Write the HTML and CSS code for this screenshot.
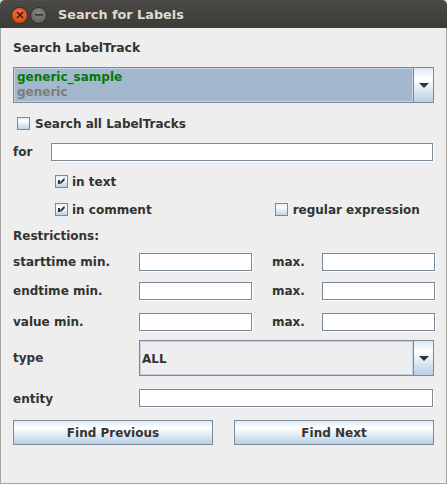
FILE: index.html
```html
<!DOCTYPE html>
<html>
<head>
<meta charset="utf-8">
<link rel="stylesheet" href="styles.css">
</head>
<body>
<div class="window">
  <div class="titlebar">
    <div class="wbtns">
      <span class="wbtn close"><svg width="8" height="8" viewBox="0 0 8 8"><path d="M1 1L7 7M7 1L1 7" stroke="#3a1a10" stroke-width="1.6"/></svg></span>
      <span class="wbtn min"><svg width="8" height="2" viewBox="0 0 8 2"><rect width="8" height="1.6" fill="#2e2d2a"/></svg></span>
    </div>
    <div class="title">Search for Labels</div>
  </div>
  <div class="body">
    <div class="row heading">Search LabelTrack</div>

    <div class="combo big">
      <div class="combo-value list">
        <div class="item-name">generic_sample</div>
        <div class="item-sub">generic</div>
      </div>
      <div class="combo-btn"><svg width="10" height="5" viewBox="0 0 10 5"><polygon points="0,0 10,0 5,5" fill="#333"/></svg></div>
    </div>

    <div class="row chkrow r-all">
      <span class="chk"><svg width="13" height="13" viewBox="0 0 13 13"><defs><linearGradient id="g1" x1="0" y1="0" x2="0" y2="1"><stop offset="0" stop-color="#dde8f3"/><stop offset="0.3" stop-color="#ffffff"/><stop offset="1" stop-color="#b8cfe5"/></linearGradient></defs><rect x="0.5" y="0.5" width="12" height="12" fill="url(#g1)" stroke="#7a8a99"/></svg></span>
      <span class="lbl">Search all LabelTracks</span>
    </div>

    <div class="row r-for">
      <span class="lbl w-for">for</span>
      <span class="field f-for"></span>
    </div>

    <div class="row chkrow r-text">
      <span class="chk"><svg width="13" height="13" viewBox="0 0 13 13"><defs><linearGradient id="g2" x1="0" y1="0" x2="0" y2="1"><stop offset="0" stop-color="#dde8f3"/><stop offset="0.3" stop-color="#ffffff"/><stop offset="1" stop-color="#b8cfe5"/></linearGradient></defs><rect x="0.5" y="0.5" width="12" height="12" fill="url(#g2)" stroke="#7a8a99"/><rect x="3" y="5" width="2" height="4" fill="#333"/><path d="M9.5 3.5L5.5 7.5M9.5 4.5L5.5 8.5" stroke="#333" stroke-width="1.2"/></svg></span>
      <span class="lbl">in text</span>
    </div>

    <div class="row chkrow r-comment">
      <div class="chkgroup">
        <span class="chk"><svg width="13" height="13" viewBox="0 0 13 13"><defs><linearGradient id="g3" x1="0" y1="0" x2="0" y2="1"><stop offset="0" stop-color="#dde8f3"/><stop offset="0.3" stop-color="#ffffff"/><stop offset="1" stop-color="#b8cfe5"/></linearGradient></defs><rect x="0.5" y="0.5" width="12" height="12" fill="url(#g3)" stroke="#7a8a99"/><rect x="3" y="5" width="2" height="4" fill="#333"/><path d="M9.5 3.5L5.5 7.5M9.5 4.5L5.5 8.5" stroke="#333" stroke-width="1.2"/></svg></span>
        <span class="lbl">in comment</span>
      </div>
      <div class="chkgroup regex">
        <span class="chk"><svg width="13" height="13" viewBox="0 0 13 13"><defs><linearGradient id="g4" x1="0" y1="0" x2="0" y2="1"><stop offset="0" stop-color="#dde8f3"/><stop offset="0.3" stop-color="#ffffff"/><stop offset="1" stop-color="#b8cfe5"/></linearGradient></defs><rect x="0.5" y="0.5" width="12" height="12" fill="url(#g4)" stroke="#7a8a99"/></svg></span>
        <span class="lbl">regular expression</span>
      </div>
    </div>

    <div class="row r-restr"><span class="lbl">Restrictions:</span></div>

    <div class="row frow r-start">
      <span class="lbl w-left">starttime min.</span>
      <span class="field f-small"></span>
      <span class="lbl w-max">max.</span>
      <span class="field f-small"></span>
    </div>
    <div class="row frow r-end">
      <span class="lbl w-left">endtime min.</span>
      <span class="field f-small"></span>
      <span class="lbl w-max">max.</span>
      <span class="field f-small"></span>
    </div>
    <div class="row frow r-value">
      <span class="lbl w-left">value min.</span>
      <span class="field f-small"></span>
      <span class="lbl w-max">max.</span>
      <span class="field f-small"></span>
    </div>

    <div class="row r-type">
      <span class="lbl w-left">type</span>
      <div class="combo small">
        <div class="combo-value plain">ALL</div>
        <div class="combo-btn"><svg width="10" height="5" viewBox="0 0 10 5"><polygon points="0,0 10,0 5,5" fill="#333"/></svg></div>
      </div>
    </div>

    <div class="row frow r-entity">
      <span class="lbl w-left">entity</span>
      <span class="field f-entity"></span>
    </div>

    <div class="row r-btns">
      <button class="btn">Find Previous</button>
      <button class="btn">Find Next</button>
    </div>
  </div>
</div>
</body>
</html>
```
FILE: styles.css
```css
html, body {
  margin: 0;
  padding: 0;
  background: #d8d8d6;
}
body {
  width: 447px;
  height: 484px;
  overflow: hidden;
  font-family: "DejaVu Sans", "Liberation Sans", sans-serif;
  font-weight: bold;
  font-size: 12px;
  color: #333333;
}
.window {
  width: 447px;
  height: 484px;
  display: flex;
  flex-direction: column;
}
.titlebar {
  height: 28px;
  flex: none;
  background: linear-gradient(#55544f 0px, #4a4945 1px, #3c3b37 28px);
  border-radius: 5px 5px 0 0;
  display: flex;
  align-items: center;
}
.wbtns {
  display: flex;
  gap: 2px;
  margin-left: 11px;
  padding-top: 2px;
}
.wbtn {
  width: 17px;
  height: 17px;
  border-radius: 50%;
  display: flex;
  align-items: center;
  justify-content: center;
  box-sizing: border-box;
}
.wbtn.close {
  background: radial-gradient(circle at 50% 35%, #f4764a, #e0521f 60%, #c23f12);
  border: 1px solid #3b2a22;
}
.wbtn.min {
  background: radial-gradient(circle at 50% 35%, #8a8882, #6b6a65 60%, #55544f);
  border: 1px solid #2e2d2a;
}
.title {
  margin-left: 11px;
  color: #dfdbd2;
  font-size: 12.8px;
  padding-top: 1px;
}
.body {
  flex: 1;
  background: #eeeeee;
  border: 1px solid #a4a4a2;
  border-top: none;
  display: flex;
  flex-direction: column;
  padding-left: 12px;
}
.row {
  display: flex;
  align-items: center;
  flex: none;
}
.heading {
  margin-top: 9px;
  height: 20px;
  font-size: 12.4px;
}
.combo {
  display: flex;
  box-sizing: border-box;
  border: 1px solid #7a8a99;
  height: 36px;
  flex: none;
}
.combo.big {
  margin-top: 10px;
  width: 421px;
}
.combo.small {
  width: 295px;
}
.combo-value {
  flex: 1;
  box-shadow: inset 0 0 0 1px #c4d3e2;
}
.combo-value.list {
  background: #a3b8cc;
  padding: 2px 0 0 3px;
}
.item-name {
  color: #007a00;
  line-height: 15px;
}
.item-sub {
  color: #7c7c7c;
  line-height: 15px;
}
.combo-value.plain {
  background: #eeeeee;
  display: flex;
  align-items: center;
  padding-left: 2px;
  padding-top: 1px;
}
.combo-btn {
  width: 19px;
  border-left: 1px solid #7a8a99;
  background: linear-gradient(#dde8f3 0%, #ffffff 30%, #b8cfe5 100%);
  display: flex;
  align-items: center;
  justify-content: center;
}
.combo-btn svg {
  margin-left: 1px;
}
.chkrow {
  height: 13px;
}
.chk {
  width: 13px;
  height: 13px;
  display: block;
  flex: none;
}
.chk svg {
  display: block;
}
.r-all {
  margin-top: 14px;
  padding-left: 4px;
}
.r-all .lbl {
  margin-left: 5px;
}
.r-for {
  margin-top: 13px;
  height: 18px;
}
.w-for {
  width: 38px;
}
.field {
  display: block;
  box-sizing: border-box;
  height: 18px;
  background: #ffffff;
  border: 1px solid #7a8a99;
  box-shadow: 1px 1px 0 #ffffff;
  flex: none;
}
.f-for {
  width: 382px;
}
.r-text {
  margin-top: 14px;
  padding-left: 42px;
}
.r-text .lbl {
  margin-left: 4px;
}
.r-comment {
  margin-top: 15px;
  padding-left: 42px;
}
.chkgroup {
  display: flex;
  align-items: center;
}
.chkgroup .lbl {
  margin-left: 4px;
}
.regex {
  margin-left: 123px;
}
.regex .lbl {
  margin-left: 5px;
}
.r-restr {
  margin-top: 12px;
  height: 16px;
}
.frow {
  height: 18px;
}
.w-left {
  width: 126px;
}
.w-max {
  width: 50px;
  margin-left: 20px;
}
.f-small {
  width: 113px;
}
.r-start {
  margin-top: 9px;
}
.r-end {
  margin-top: 11px;
}
.r-value {
  margin-top: 13px;
}
.r-type {
  margin-top: 9px;
  height: 36px;
}
.r-entity {
  margin-top: 13px;
}
.r-entity .lbl {
  padding-top: 1px;
}
.f-entity {
  width: 294px;
}
.r-btns {
  margin-top: 13px;
  height: 25px;
  gap: 21px;
}
.btn {
  width: 200px;
  height: 25px;
  box-sizing: border-box;
  border: 1px solid #7a8a99;
  background: linear-gradient(#dde8f3 0%, #ffffff 30%, #b8cfe5 100%);
  font-family: "DejaVu Sans", "Liberation Sans", sans-serif;
  font-weight: bold;
  font-size: 12px;
  color: #333333;
  padding: 0;
  margin: 0;
}
```
